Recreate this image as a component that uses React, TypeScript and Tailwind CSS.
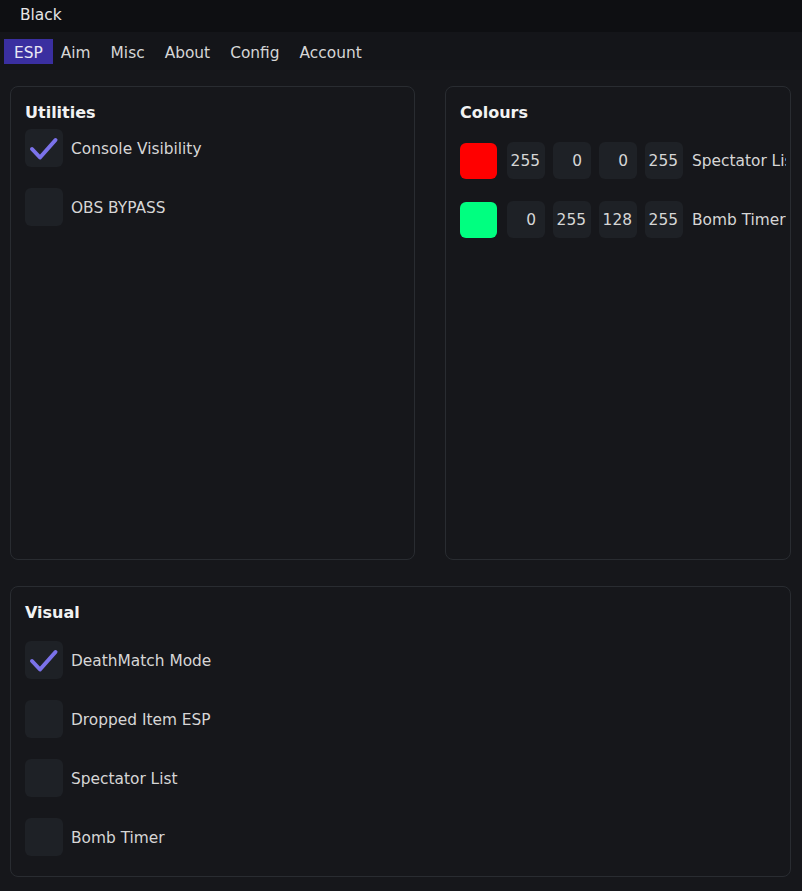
const tabs = ['Aim', 'Misc', 'About', 'Config', 'Account'];

function Check({ checked, label }: { checked?: boolean; label: string }) {
  return (
    <div className="flex items-center h-[38px]">
      <div className="w-[38px] h-[38px] rounded-[6px] bg-[#1e2126] flex items-center justify-center">
        {checked && (
          <svg width="38" height="38" viewBox="0 0 38 38">
            <path
              d="M7 20 L15 28.5 L30.5 11"
              fill="none"
              stroke="#7b72ea"
              strokeWidth="4"
              strokeLinecap="round"
              strokeLinejoin="round"
            />
          </svg>
        )}
      </div>
      <span className="ml-[8px] pt-[3px] text-[15.4px] text-[#d6d6d6]">{label}</span>
    </div>
  );
}

function ColourRow({ swatch, values, label }: { swatch: string; values: number[]; label: string }) {
  return (
    <div className="flex items-center gap-[8px] h-[37px] whitespace-nowrap">
      <div className="mr-[2px] w-[37px] h-[36px] rounded-[6px] shrink-0" style={{ backgroundColor: swatch }} />
      {values.map((v, i) => (
        <div
          key={i}
          className={
            'w-[38px] h-[37px] shrink-0 rounded-[6px] bg-[#1e2126] flex items-center justify-end pt-[3px] text-[15.4px] text-[#d6d6d6] ' +
            (v > 99 ? 'pr-[5px]' : 'pr-[9px]')
          }
        >
          {v}
        </div>
      ))}
      <span className="ml-[1px] pt-[3px] text-[15.4px] text-[#d6d6d6]">{label}</span>
    </div>
  );
}

export default function App() {
  return (
    <div className="w-[802px] h-[891px] bg-[#16171b] flex flex-col overflow-hidden font-['DejaVu_Sans',sans-serif]">
      {/* Title bar */}
      <div className="h-[32px] bg-[#0e0f12] flex items-center pl-[20px] pb-[1px] text-[15.4px] text-[#e6e6e6]">
        Black
      </div>

      {/* Tabs */}
      <div className="h-[38px] bg-[#141519] flex items-start pt-[7px] text-[15.4px] text-[#d6d6d6]">
        <div className="ml-[4px] h-[25px] px-[10px] pt-[4px] bg-[#3a2fa0] flex items-center text-[#e8e8f4]">ESP</div>
        <div className="flex items-center h-[25px] pt-[4px] ml-[8px] gap-[20px]">
          {tabs.map((t) => (
            <span key={t}>{t}</span>
          ))}
        </div>
      </div>

      {/* Content */}
      <div className="flex-1 pl-[10px] pr-[11px] pt-[16px] flex flex-col">
        <div className="flex gap-[30px] h-[474px]">
          {/* Utilities */}
          <div className="w-[405px] rounded-[8px] border border-[#292c31] pl-[14px] pt-[15px]">
            <h2 className="text-[16px] font-bold text-[#f2f2f2] leading-[22px]">Utilities</h2>
            <div className="mt-[5px] flex flex-col gap-[21px]">
              <Check checked label="Console Visibility" />
              <Check label="OBS BYPASS" />
            </div>
          </div>

          {/* Colours */}
          <div className="flex-1 rounded-[8px] border border-[#292c31] pl-[14px] pr-[4px] pt-[15px] overflow-hidden">
            <h2 className="text-[16px] font-bold text-[#f2f2f2] leading-[22px]">Colours</h2>
            <div className="mt-[18px] flex flex-col gap-[22px] overflow-hidden">
              <ColourRow swatch="#ff0000" values={[255, 0, 0, 255]} label="Spectator List" />
              <ColourRow swatch="#00ff80" values={[0, 255, 128, 255]} label="Bomb Timer" />
            </div>
          </div>
        </div>

        {/* Visual */}
        <div className="mt-[26px] h-[291px] rounded-[8px] border border-[#292c31] pl-[14px] pt-[15px]">
          <h2 className="text-[16px] font-bold text-[#f2f2f2] leading-[22px]">Visual</h2>
          <div className="mt-[17px] flex flex-col gap-[21px]">
            <Check checked label="DeathMatch Mode" />
            <Check label="Dropped Item ESP" />
            <Check label="Spectator List" />
            <Check label="Bomb Timer" />
          </div>
        </div>
      </div>
    </div>
  );
}
